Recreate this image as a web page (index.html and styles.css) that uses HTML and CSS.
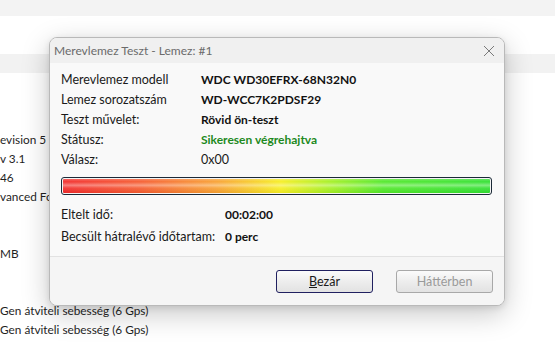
FILE: index.html
```html
<!DOCTYPE html>
<html lang="hu">
<head>
<meta charset="utf-8">
<title>Merevlemez Teszt</title>
<link rel="stylesheet" href="styles.css">
</head>
<body>
<div class="page">
  <div class="topband"></div>
  <div class="whitegap"></div>
  <div class="headband"></div>
  <div class="bglist">
    <div class="bgline"></div>
    <div class="bgline"></div>
    <div class="bgline"></div>
    <div class="bgline">evision 5</div>
    <div class="bgline">v 3.1</div>
    <div class="bgline">46</div>
    <div class="bgline">vanced Fo</div>
    <div class="bgline"></div>
    <div class="bgline"></div>
    <div class="bgline">MB</div>
    <div class="bgline"></div>
    <div class="bgline"></div>
    <div class="bgline">Gen átviteli sebesség (6 Gps)</div>
    <div class="bgline">Gen átviteli sebesség (6 Gps)</div>
  </div>

  <div class="dialog">
    <div class="titlebar">
      <span class="title">Merevlemez Teszt - Lemez: #1</span>
      <svg class="close" width="12" height="12" viewBox="0 0 12 12"><path d="M1 1 L11 11 M11 1 L1 11" stroke="#7a7a7a" stroke-width="1" fill="none"/></svg>
    </div>
    <div class="content">
      <div class="info">
        <div class="lbl">Merevlemez modell</div><div class="val strong">WDC WD30EFRX-68N32N0</div>
        <div class="lbl">Lemez sorozatszám</div><div class="val strong">WD-WCC7K2PDSF29</div>
        <div class="lbl">Teszt művelet:</div><div class="val strong">Rövid ön-teszt</div>
        <div class="lbl">Státusz:</div><div class="val strong ok">Sikeresen végrehajtva</div>
        <div class="lbl">Válasz:</div><div class="val">0x00</div>
      </div>
      <div class="bar"><div class="fill"></div></div>
      <div class="times">
        <div class="lbl">Eltelt idő:</div><div class="val strong">00:02:00</div>
        <div class="lbl">Becsült hátralévő időtartam:</div><div class="val strong">0 perc</div>
      </div>
    </div>
    <div class="footer">
      <button class="btn primary"><u>B</u>ezár</button>
      <button class="btn disabled">Háttérben</button>
    </div>
  </div>
</div>
</body>
</html>
```

FILE: styles.css
```css
html, body {
  margin: 0;
  padding: 0;
  background: #ffffff;
  font-family: Lato, "Noto Sans", sans-serif;
  font-size: 12px;
  color: #1a1a1a;
}
.page {
  position: relative;
  width: 555px;
  height: 357px;
  overflow: hidden;
}
.topband { height: 16px; background: #f3f3f3; }
.whitegap { height: 38px; background: #ffffff; }
.headband { height: 19px; background: #f2f2f2; }
.bgline {
  height: 19px;
  line-height: 19px;
  white-space: nowrap;
  color: #1f1f1f;
  font-size: 11.8px;
}

.dialog {
  position: absolute;
  left: 49px;
  top: 37px;
  width: 456px;
  height: 269px;
  box-sizing: border-box;
  border: 1px solid #b9b9b9;
  border-radius: 8px;
  background: #f9f9f9;
  box-shadow: 0 8px 28px rgba(0,0,0,0.22), 0 2px 6px rgba(0,0,0,0.10);
  display: flex;
  flex-direction: column;
  overflow: hidden;
}
.titlebar {
  height: 25px;
  background: #f0f0f0;
  display: flex;
  align-items: center;
  justify-content: space-between;
  padding: 0 9px 0 4px;
  flex: none;
}
.title { color: #6b6b6b; font-size: 12px; }
.close { display: block; }
.content {
  flex: 1;
  padding: 7px 12px 0 11px;
}
.info {
  display: grid;
  grid-template-columns: 140px 1fr;
  grid-auto-rows: 20px;
  align-items: center;
}
.lbl, .val { line-height: 20px; white-space: nowrap; font-size: 12.5px; }
.val.strong { font-weight: 700; color: #111; font-size: 12px; }
.val.ok { color: #1e8a1e; }
.bar {
  margin-top: 7px;
  height: 18px;
  box-sizing: border-box;
  border: 1px solid #1c2a38;
  border-radius: 3px;
  padding: 1px;
  background: #f4f4f4;
}
.fill {
  height: 100%;
  border-radius: 1px;
  background:
    linear-gradient(to bottom, rgba(255,255,255,0.25) 0%, rgba(255,255,255,0.05) 20%, rgba(255,255,255,0.4) 45%, rgba(255,255,255,0.1) 65%, rgba(0,0,0,0.04) 100%),
    linear-gradient(to right, #f22a2a 0%, #f55a2e 18%, #f8a030 36%, #f6ee20 51%, #a8f020 62%, #50e828 75%, #30e030 100%);
}
.times {
  margin-top: 9px;
  display: grid;
  grid-template-columns: 164px 1fr;
  grid-auto-rows: 22px;
  align-items: center;
}
.footer {
  flex: none;
  height: 49px;
  border-top: 1px solid #e2e2e2;
  background: #f5f5f5;
  display: flex;
  align-items: center;
  justify-content: flex-end;
  gap: 23px;
  padding: 0 11px 0 0;
  box-sizing: border-box;
}
.btn {
  width: 97px;
  height: 23px;
  box-sizing: border-box;
  border-radius: 3px;
  font-family: Lato, "Noto Sans", sans-serif;
  font-size: 12.5px;
  padding: 0;
  background: linear-gradient(to bottom, #fbfbfb 0%, #ececec 55%, #e2e2e2 100%);
}
.primary { border: 1px solid #202060; color: #1a1a1a; }
.disabled { border: 1px solid #a8a8a8; color: #9a9a9a; }
```
